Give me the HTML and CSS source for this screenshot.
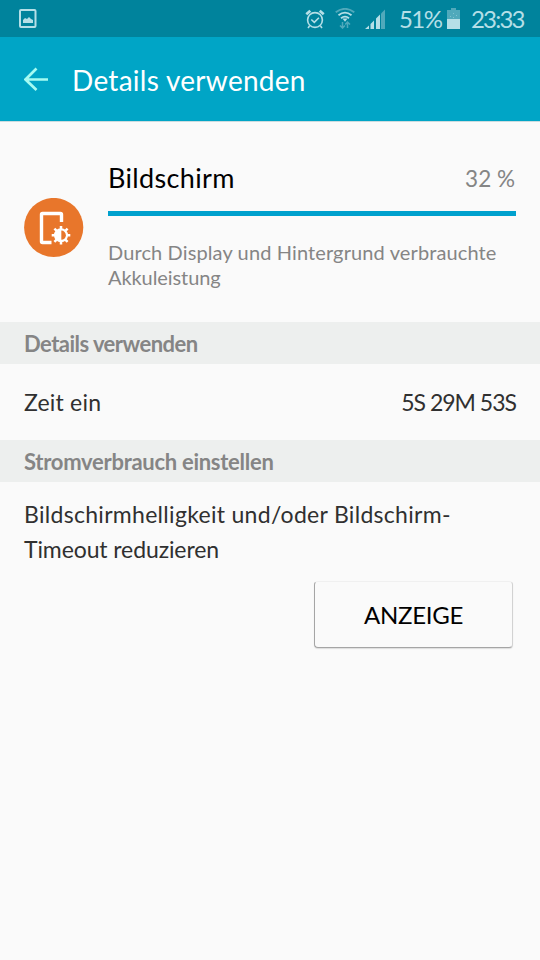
FILE: index.html
```html
<!DOCTYPE html>
<html lang="de">
<head>
<meta charset="utf-8">
<title>Details verwenden</title>
<link rel="stylesheet" href="styles.css">
</head>
<body>
<div class="status-bar">
  <svg class="picture" width="18" height="19" viewBox="0 0 18 19"><rect x="1" y="1" width="15.5" height="17" rx="1" fill="none" stroke="#b5dfe7" stroke-width="2"/><path d="M4 14v-3l2-2 2 1 2-2 2 2 2 1v3z" fill="#b5dfe7"/></svg>
  <svg class="alarm" width="20" height="20" viewBox="0 0 20 20" fill="none" stroke="#b5dfe7"><circle cx="10" cy="11" r="7.4" stroke-width="1.6"/><path d="M6.3 10.5l3 2.8 4.6-4.6M4.5 17l-1.5 2M15.5 17l1.5 2" stroke-width="1.6"/><path d="M1.3 5.2l4-3.4M18.7 5.2l-4-3.4" stroke-width="2.8"/></svg>
  <svg class="wifi" width="20" height="21" viewBox="0 0 20 21" fill="none"><path d="M.7 4.3Q10-2.7 19.3 4.3" stroke="#50a9bb" stroke-width="1.8"/><path d="M3.5 7.2q6.5-5 13 0M6 10.2q4-3.2 8 0" stroke="#b5dfe7" stroke-width="1.8"/><path d="M7.5 10.6h5L10 13.8z" fill="#b5dfe7"/><path d="M7.5 14v6M5 17.5L7.5 20l2.5-2.5M12.5 20v-6M10.2 16.5l2.3-2.5 2.5 2.5" stroke="#50a9bb" stroke-width="1.5"/></svg>
  <svg class="signal" width="20" height="20" viewBox="0 0 20 20" fill="#b5dfe7"><path d="M0 20l4-3.5V20zM5.500 20v-5l3.500-3.500V20zM11 20V9.500L15 5.500V20z"/><path d="M16 20V4.500L20 .5V20z" fill="#50a9bb"/></svg>
  <span class="level">51%</span>
  <svg class="battery" width="13" height="21" viewBox="0 0 13 21"><path d="M0 2h4V0h5v2h4v9H0z" fill="#50a9bb"/><path d="M0 11h13v10H0z" fill="#b5dfe7"/><path d="M3 8h1v1H3zM6 5h1v1H6zM9 7h1v1H9zM6 9h1v1H6z" fill="#80c4d0"/></svg>
  <span class="clock">23:33</span>
</div>
<header class="app-bar">
  <svg class="back" width="24" height="24" viewBox="0 0 24 24" fill="none" stroke="#a5fbf2" stroke-width="2.7"><path d="M24 12.5H2M12.500 1.500l-11 11 11 10.500"/></svg>
  <h1>Details verwenden</h1>
</header>
<main>
  <section class="usage">
    <svg class="usage-icon" width="60" height="60" viewBox="0 0 60 60"><circle cx="29.7" cy="29.5" r="29.6" fill="#e8762b"/><path d="M37.500 24v-7.500q0-1-1-1h-18q-1 0-1 1v27q0 1 1 1h9" fill="none" stroke="#fff" stroke-width="3.400"/><path d="M37 28v18.500M27.700 37.200h18.600M30.400 30.600l13.200 13.200M43.600 30.600L30.400 43.800" stroke="#fff" stroke-width="2.500"/><circle cx="37" cy="37.200" r="7" fill="#fff"/><path d="M37.300 32.600a4.600 4.600 0 0 1 0 9.200z" fill="#e8762b"/></svg>
    <div class="usage-body">
      <div class="usage-head"><span class="name">Bildschirm</span><span class="percent">32 %</span></div>
      <div class="meter"></div>
      <p class="note"><span class="note-first">Durch Display und Hintergrund verbrauchte</span><br><span class="note-last">Akkuleistung</span></p>
    </div>
  </section>
  <h2><span class="details">Details verwenden</span></h2>
  <div class="row"><span class="label">Zeit ein</span><span class="value">5S 29M 53S</span></div>
  <h2><span class="power">Stromverbrauch einstellen</span></h2>
  <p class="advice"><span class="advice-first">Bildschirmhelligkeit und/oder Bildschirm-</span><br><span class="advice-last">Timeout reduzieren</span></p>
  <button type="button">ANZEIGE</button>
</main>
</body>
</html>
```

FILE: styles.css
```css
* { box-sizing: border-box; }
body { margin: 0; min-height: 960px; background: #fafafa; color: #303030; font-family: Lato, "Open Sans", sans-serif; }
svg { display: block; flex: none; }
h1, h2, p { margin: 0; font-weight: 400; }
span { white-space: nowrap; }
.status-bar { height: 37px; padding: 0 15px 0 19px; display: flex; align-items: center; background: #00839c; color: #b5dfe7; font-size: 24px; }
.picture { margin-right: auto; }
.alarm { margin-right: 10px; }
.wifi { margin-right: 10px; }
.signal { margin-right: 14px; }
.level { width: 43px; margin-right: 5px; letter-spacing: -1.6px; }
.battery { margin-right: 11px; }
.clock { width: 54px; letter-spacing: -1.8px; }
.app-bar { height: 85px; padding: 0 24px; display: flex; align-items: center; gap: 24px; background: #00a5c6; border-bottom: 1px solid #cbdcdf; color: #fff; }
h1 { font-size: 28px; line-height: 40px; letter-spacing: .28px; padding-top: 1px; }
.usage { height: 200px; padding: 38px 24px 0; display: flex; gap: 24px; }
.usage-icon { margin-top: 38px; }
.usage-body { flex: 1; }
.usage-head { height: 51px; display: flex; justify-content: space-between; line-height: 36px; }
.name { color: #000; font-size: 27px; letter-spacing: .35px; }
.percent { color: #858585; font-size: 22.5px; padding: 1px 1px 0 0; }
.meter { height: 5px; background: #00a1ce; }
.note { margin-top: 24px; color: #858585; font-size: 20px; line-height: 25px; }
.note-first { letter-spacing: .12px; }
.note-last { letter-spacing: -.08px; }
h2 { height: 42px; padding: 0 24px; background: #edefee; color: #858585; font-size: 22px; line-height: 43px; font-weight: 700; }
.details { letter-spacing: -.53px; }
.power { letter-spacing: -.28px; }
.row { height: 76px; padding: 0 24px; display: flex; align-items: center; justify-content: space-between; font-size: 23px; }
.label { letter-spacing: .2px; }
.value { letter-spacing: -1px; }
.advice { padding: 15px 24px 0; font-size: 23px; line-height: 35px; }
.advice-first { letter-spacing: .3px; }
.advice-last { letter-spacing: -.1px; }
button { display: block; width: 199px; height: 67px; margin: 14px 27px 0 auto; padding: 0; border: 1px solid; border-color: #f0f0f0 #d2d2d2 #a5a5a5 #a5a5a5; border-radius: 4px; background: #fafafa; box-shadow: 0 1px 1px #ddd; color: #000; font: 24px Lato, sans-serif; letter-spacing: -.3px; }
```
